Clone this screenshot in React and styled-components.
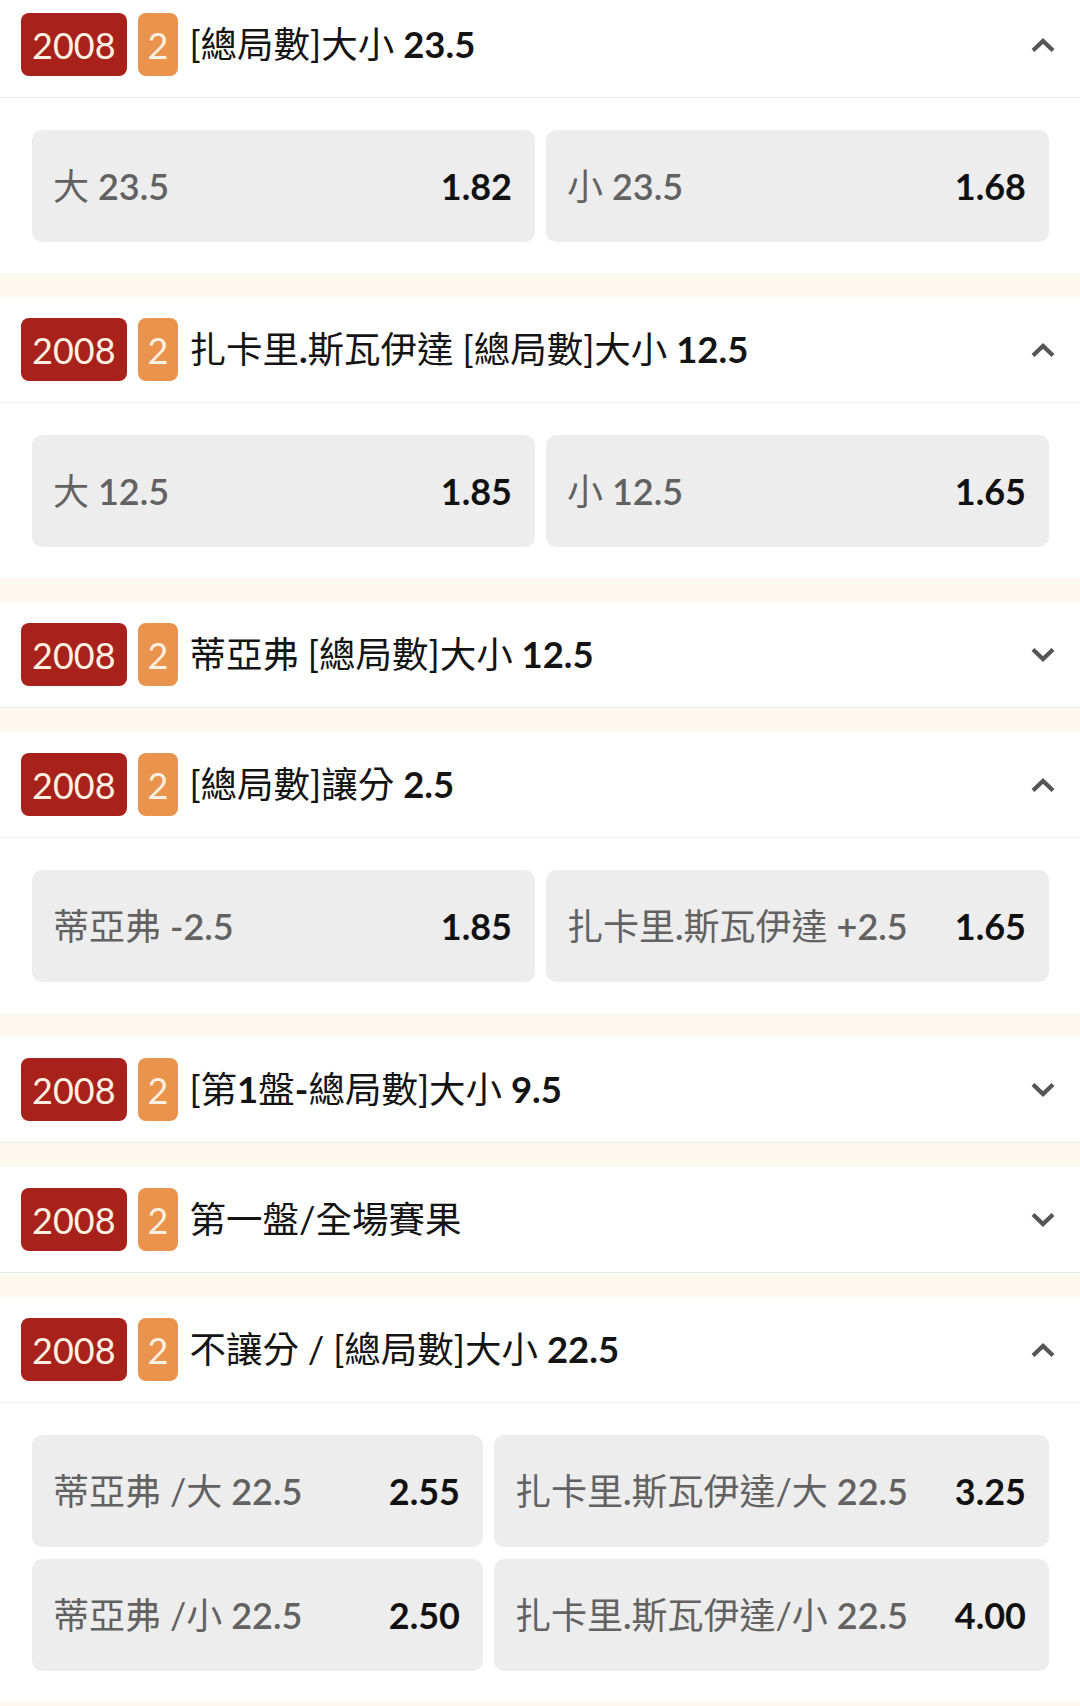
import React from "react";
import styled, { createGlobalStyle } from "styled-components";

const GlobalStyle = createGlobalStyle`
  html, body {
    margin: 0;
    padding: 0;
    background: #fdf9ef;
  }
  body {
    font-family: "Lato", "Noto Sans CJK TC", "Noto Sans", sans-serif;
    -webkit-font-smoothing: antialiased;
  }
  * { box-sizing: border-box; }
`;

const List = styled.div`
  display: flex;
  flex-direction: column;
  gap: 24px;
  margin-top: -8px;
  background: #fdf9ef;
  min-height: 1714px;
`;

const Section = styled.section`
  background: #ffffff;
  display: flex;
  flex-direction: column;
`;

const Header = styled.div`
  display: flex;
  align-items: center;
  height: 106px;
  padding: 0 25px 0 21px;
  border-bottom: 1px solid #ececec;
`;

const Badge = styled.span`
  display: inline-flex;
  align-items: center;
  justify-content: center;
  height: 63px;
  padding: 0 ${(p) => (p.$tone === "year" ? "11px" : "10px")};
  border-radius: 8px;
  background: ${(p) => (p.$tone === "year" ? "#a8211a" : "#e9934c")};
  color: #fdf1e3;
  font-family: "Lato", sans-serif;
  font-size: 36px;
  font-weight: 400;
  line-height: 1;
  margin-right: 11px;
`;

const Title = styled.div`
  flex: 1;
  min-width: 0;
  font-size: 36.5px;
  font-weight: 700;
  color: #141414;
  white-space: nowrap;
  line-height: 1;
`;

const Regular = styled.span`
  font-weight: 400;
`;

const Chevron = styled.svg`
  width: 24px;
  height: 14px;
  flex: none;
`;

const Body = styled.div`
  display: grid;
  grid-template-columns: ${(p) => p.$cols};
  gap: 12px 11px;
  padding: 32px 31px 31px 32px;
`;

const OddsButton = styled.div`
  display: flex;
  align-items: center;
  justify-content: space-between;
  height: 112px;
  padding: 0 23px 0 21px;
  background: #ededed;
  border-radius: 10px;
  font-size: 36px;
  line-height: 1;
  white-space: nowrap;
  min-width: 0;
`;

const Label = styled.span`
  color: #626262;
  font-weight: 600;
`;

const Odds = styled.span`
  color: #111111;
  font-weight: 700;
  margin-left: 20px;
`;

const REGULAR_RUN = /([\u2E80-\u9FFF\uF900-\uFAFF\uFF00-\uFFEF\[\]\/]+)/;
const IS_REGULAR = /^[\u2E80-\u9FFF\uF900-\uFAFF\uFF00-\uFFEF\[\]\/]/;

function Rich({ text }) {
  return text
    .split(REGULAR_RUN)
    .filter(Boolean)
    .map((seg, i) =>
      IS_REGULAR.test(seg) ? <Regular key={i}>{seg}</Regular> : <React.Fragment key={i}>{seg}</React.Fragment>
    );
}

function Arrow({ open }) {
  return (
    <Chevron viewBox="0 0 24 14" aria-hidden="true">
      <polyline
        points={open ? "2,12.5 12,3 22,12.5" : "2,1.5 12,11 22,1.5"}
        fill="none"
        stroke="#555555"
        strokeWidth="4.2"
        strokeLinejoin="miter"
      />
    </Chevron>
  );
}

const markets = [
  {
    title: "[總局數]大小 23.5",
    open: true,
    cols: "1fr 1fr",
    odds: [
      ["大 23.5", "1.82"],
      ["小 23.5", "1.68"],
    ],
  },
  {
    title: "扎卡里.斯瓦伊達 [總局數]大小 12.5",
    open: true,
    cols: "1fr 1fr",
    odds: [
      ["大 12.5", "1.85"],
      ["小 12.5", "1.65"],
    ],
  },
  { title: "蒂亞弗 [總局數]大小 12.5", open: false },
  {
    title: "[總局數]讓分 2.5",
    open: true,
    cols: "1fr 1fr",
    odds: [
      ["蒂亞弗 -2.5", "1.85"],
      ["扎卡里.斯瓦伊達 +2.5", "1.65"],
    ],
  },
  { title: "[第1盤-總局數]大小 9.5", open: false },
  { title: "第一盤/全場賽果", open: false },
  {
    title: "不讓分 / [總局數]大小 22.5",
    open: true,
    cols: "451fr 555fr",
    odds: [
      ["蒂亞弗 /大 22.5", "2.55"],
      ["扎卡里.斯瓦伊達/大 22.5", "3.25"],
      ["蒂亞弗 /小 22.5", "2.50"],
      ["扎卡里.斯瓦伊達/小 22.5", "4.00"],
    ],
  },
];

export default function App() {
  return (
    <>
      <GlobalStyle />
      <List>
        {markets.map((m, idx) => (
          <Section key={idx}>
            <Header>
              <Badge $tone="year">2008</Badge>
              <Badge $tone="set">2</Badge>
              <Title>
                <Rich text={m.title} />
              </Title>
              <Arrow open={m.open} />
            </Header>
            {m.open && (
              <Body $cols={m.cols}>
                {m.odds.map(([label, price], j) => (
                  <OddsButton key={j}>
                    <Label>
                      <Rich text={label} />
                    </Label>
                    <Odds>{price}</Odds>
                  </OddsButton>
                ))}
              </Body>
            )}
          </Section>
        ))}
      </List>
    </>
  );
}
